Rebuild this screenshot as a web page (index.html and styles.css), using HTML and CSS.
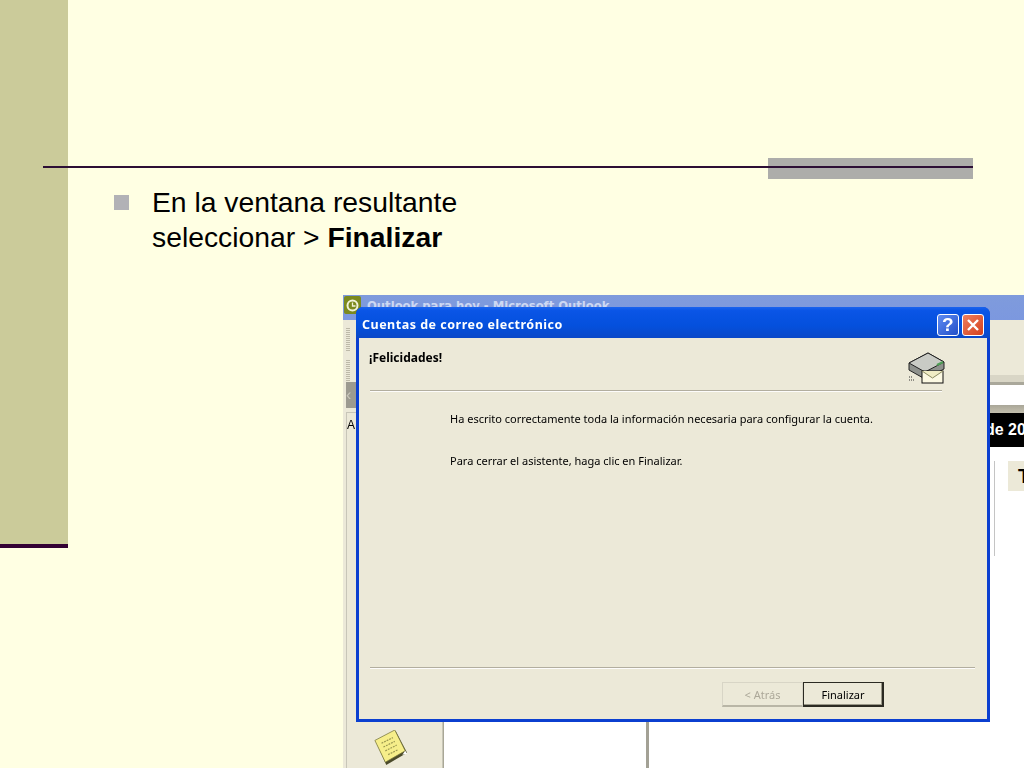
FILE: index.html
```html
<!DOCTYPE html>
<html lang="es">
<head>
    <meta charset="UTF-8">
    <meta name="viewport" content="width=device-width, initial-scale=1.0">
    <title>Cuentas de correo electrónico</title>
    <link rel="stylesheet" href="styles.css">
</head>
<body>
    <div class="slide">
        <div class="sidebar"></div>
        <div class="rule"><div class="rule-block"></div></div>

        <ul class="bullets">
            <li>En la ventana resultante<br>seleccionar &gt; <strong>Finalizar</strong></li>
        </ul>

        <!-- captura de pantalla de Outlook -->
        <div class="shot">
            <div class="shot-title">
                <svg class="shot-logo" width="17" height="18" viewBox="0 0 17 18">
                    <rect width="17" height="18" rx="2" fill="#7c8a1e"/>
                    <circle cx="8.500" cy="9.500" r="5" fill="none" stroke="#f1f2d8" stroke-width="2"/>
                    <path d="M8.500 6.500v3.500h3" fill="none" stroke="#f1f2d8" stroke-width="1.300"/>
                </svg>
                <span>Outlook para hoy - Microsoft Outlook</span>
            </div>
            <div class="shot-body">
                <div class="shot-left">
                    <div class="grip"></div>
                    <div class="grip"></div>
                    <div class="nav-head">‹</div>
                    <div class="nav-label">A</div>
                    <svg class="note" width="36" height="36" viewBox="0 0 38 38">
                        <path d="M3 12 L24 1 L36 24 L14 37 Z" fill="#4a4a2a"/>
                        <path d="M2 11 L23 0 L34 22 L13 34 Z" fill="#f6ee8a" stroke="#77763a" stroke-width=".8"/>
                        <path d="M9 14l12-6M11 18l12-6M13 22l12-6M16 26l10-5" stroke="#9b9850" stroke-width="1.300" stroke-dasharray="2 1"/>
                        <path d="M34 22l2 3-5 1z" fill="#fff"/>
                    </svg>
                </div>
                <div class="shot-list"></div>
                <div class="shot-main">
                    <div class="toolbar-space"></div>
                    <div class="toolbar-line"></div>
                    <div class="white-strip"></div>
                    <div class="tan-strip"></div>
                    <div class="date-bar"><span>de 20</span></div>
                    <div class="today">
                        <div class="today-line"></div>
                        <div class="today-box">T</div>
                    </div>
                </div>
            </div>
        </div>

        <!-- dialogo -->
        <div class="dialog">
            <div class="dialog-title">
                <span>Cuentas de correo electrónico</span>
                <div class="title-btns">
                    <div class="title-btn help">?</div>
                    <div class="title-btn close">
                        <svg width="14" height="14" viewBox="0 0 14 14">
                            <path d="M2 2l10 10M12 2l-10 10" stroke="#fff" stroke-width="2.400"/>
                        </svg>
                    </div>
                </div>
            </div>
            <div class="dialog-body">
                <div class="dialog-head">
                    <h2>¡Felicidades!</h2>
                    <svg class="mail-icon" width="38" height="32" viewBox="0 0 38 32">
                        <path d="M1 11 L20 1 L36 10 L36 17 L17 27 L1 18 Z" fill="#8f928d" stroke="#222" stroke-width="1"/>
                        <path d="M1 11 L17 20 L36 10 L20 1 Z" fill="#c9cbc5" stroke="#222" stroke-width="1"/>
                        <path d="M17 20 L17 27" stroke="#222"/>
                        <path d="M29 13l6-3" stroke="#4f9f55" stroke-width="2"/>
                        <path d="M1 25h4M1 28h5" stroke="#333" stroke-dasharray="1 1"/>
                        <rect x="14" y="19" width="21" height="12" fill="#fbf8e2" stroke="#111"/>
                        <path d="M14 19l10.500 7 10.500-7" fill="#f0ecc4" stroke="#8a8a60"/>
                    </svg>
                </div>
                <div class="sep sep-short"></div>
                <div class="message">
                    <p>Ha escrito correctamente toda la información necesaria para configurar la cuenta.</p>
                    <p>Para cerrar el asistente, haga clic en Finalizar.</p>
                </div>
                <div class="sep"></div>
                <div class="actions">
                    <button class="btn" disabled>&lt; Atrás</button>
                    <button class="btn primary">Finalizar</button>
                </div>
            </div>
        </div>
    </div>
</body>
</html>
```

FILE: styles.css
```css
html, body {
    margin: 0;
    padding: 0;
}
body {
    background: #ffffe3;
    font-family: "Liberation Sans", Arial, sans-serif;
}
.slide {
    position: relative;
    width: 1024px;
    height: 768px;
    overflow: hidden;
}
.sidebar {
    width: 68px;
    height: 544px;
    background: #cbcb9a;
    border-bottom: 4px solid #330033;
}
.rule {
    position: absolute;
    left: 43px;
    top: 166px;
    width: 930px;
    height: 2px;
    background: #2d0f35;
}
.rule-block {
    position: absolute;
    right: 0;
    top: -8px;
    width: 205px;
    height: 21px;
    background: #adadaa;
    z-index: -1;
}
.bullets {
    position: absolute;
    left: 115px;
    top: 185px;
    margin: 0;
    padding: 0;
    list-style: none;
}
.bullets li {
    position: relative;
    padding-left: 37px;
    font-size: 28.300px;
    line-height: 35px;
    color: #000;
}
.bullets li::before {
    content: "";
    position: absolute;
    left: -1px;
    top: 10px;
    width: 15px;
    height: 15px;
    background: #b2b2b6;
}

/* ventana de fondo */
.shot {
    position: absolute;
    left: 343px;
    top: 295px;
    width: 681px;
    height: 473px;
    display: flex;
    flex-direction: column;
    background: #ece9d8;
    filter: blur(.3px);
}
.shot-title {
    height: 25px;
    flex: none;
    display: flex;
    align-items: flex-start;
    gap: 6px;
    background: linear-gradient(#7f9bdc, #7c98df);
    color: #cdd8f3;
    font: bold 11.600px "DejaVu Sans", sans-serif;
    padding-top: 4px;
    box-sizing: border-box;
}
.shot-logo {
    margin-top: -3px;
    margin-left: 1px;
    flex: none;
}
.shot-body {
    flex: 1;
    display: flex;
    min-height: 0;
}
.shot-left {
    width: 100px;
    flex: none;
    padding-left: 2px;
    box-sizing: border-box;
    position: relative;
    background: #ece9d8;
}
.grip {
    width: 4px;
    height: 24px;
    margin: 8px 0 0 1px;
    background: repeating-linear-gradient(#bdb9a8 0 1px, #ece9d8 1px 2px);
}
.nav-head {
    margin: 0 0 0 3px;
    position: absolute;
    left: 0;
    top: 62px;
    width: 100%;
    height: 26px;
    background: #9c9a90;
    color: #c9c7bb;
    font-size: 16px;
    line-height: 26px;
}
.nav-label {
    position: absolute;
    left: 3px;
    top: 92px;
    width: 97px;
    height: 400px;
    border: 1px solid #c8c6b8;
    box-sizing: border-box;
    font-size: 12px;
    line-height: 24px;
}
.note {
    position: absolute;
    left: 30px;
    top: 410px;
}
.shot-list {
    width: 202px;
    flex: none;
    background: #fff;
    border-left: 1px solid #a9a796;
    margin-top: 92px;
}
.shot-main {
    flex: 1;
    min-width: 0;
    border-left: 3px solid #a3a195;
    background: #fff;
    display: flex;
    flex-direction: column;
}
.toolbar-space {
    height: 55px;
    flex: none;
    background: #ece9d8;
}
.toolbar-line {
    height: 7px;
    flex: none;
    background: #d9d6c6;
    border-bottom: 3px solid #aaa89b;
}
.white-strip {
    height: 20px;
    flex: none;
    background: #fff;
}
.tan-strip {
    height: 8px;
    flex: none;
    background: linear-gradient(#a9a698, #c4c0ae);
}
.date-bar {
    height: 34px;
    flex: none;
    background: #000;
    color: #fff;
    font: bold 16px/34px "Liberation Sans", sans-serif;
    display: flex;
    justify-content: flex-end;
    white-space: nowrap;
}
.date-bar span {
    width: 39px;
    overflow: hidden;
    flex: none;
}
.today {
    display: flex;
    justify-content: flex-end;
    padding-top: 14px;
}
.today-line {
    width: 1px;
    height: 95px;
    background: #c4c4c4;
    margin-right: 13px;
}
.today-box {
    width: 16px;
    height: 30px;
    background: #ece9d8;
    font: bold 20px/30px "Liberation Sans", sans-serif;
    padding-left: 10px;
    box-sizing: border-box;
    overflow: hidden;
}

/* dialogo */
.dialog {
    position: absolute;
    left: 356px;
    top: 307px;
    width: 634px;
    height: 415px;
    box-sizing: border-box;
    display: flex;
    flex-direction: column;
    background: #0b3fd0;
    border-radius: 7px 7px 0 0;
    padding: 0 3px 3px;
    filter: blur(.3px);
}
.dialog-title {
    height: 31px;
    flex: none;
    display: flex;
    align-items: center;
    justify-content: space-between;
    margin: 0 -3px;
    padding: 0 6px 0 6px;
    border-radius: 7px 7px 0 0;
    background: linear-gradient(#1a63ee 0, #0a55e6 12%, #0450dd 60%, #0a48c8 100%);
    color: #fff;
    font: bold 12.500px "Noto Sans", sans-serif;
    letter-spacing: .5px;
}
.dialog-title span {
    padding-top: 4px;
}
.title-btns {
    display: flex;
    gap: 3px;
    padding-top: 4px;
}
.title-btn {
    width: 22px;
    height: 22px;
    box-sizing: border-box;
    border: 1px solid #fff;
    border-radius: 3px;
    display: flex;
    align-items: center;
    justify-content: center;
}
.help {
    background: linear-gradient(135deg, #5f8cf2, #2350c8);
    color: #fff;
    font: bold 19px "Liberation Sans", sans-serif;
}
.close {
    background: linear-gradient(135deg, #ee8060, #d5401c);
}
.dialog-body {
    flex: 1;
    min-height: 0;
    background: #ece9d8;
    display: flex;
    flex-direction: column;
    padding: 0 12px 0 11px;
    color: #000;
    font: 11px "Noto Sans", "DejaVu Sans", sans-serif;
}
.dialog-head {
    height: 52px;
    display: flex;
    justify-content: space-between;
    flex: none;
    margin-right: 33px;
}
.dialog-head h2 {
    margin: 11px 0 0 -1px;
    font-size: 12px;
    font-weight: bold;
}
.mail-icon {
    margin: 14px -4px 0 0;
}
.sep {
    height: 1px;
    flex: none;
    background: #aca899;
    border-bottom: 1px solid #fff;
    opacity: .9;
}
.sep-short {
    margin-right: 33px;
}
.message {
    flex: 1;
    padding-left: 80px;
}
.message p {
    margin: 0 0 29px;
    line-height: 13px;
}
.message p:first-child {
    margin-top: 20px;
}
.actions {
    height: 50px;
    flex: none;
    display: flex;
    justify-content: flex-end;
    align-items: flex-start;
    padding: 13px 91px 0 0;
    box-sizing: border-box;
}
.btn {
    width: 81px;
    height: 25px;
    padding: 0;
    border: 1px solid #d8d5c6;
    border-bottom: 2px solid #b9b6a6;
    background: #ece9d8;
    color: #aca899;
    font: inherit;
}
.primary {
    border: 2px solid #2b2a22;
    border-top-width: 1px;
    border-left-width: 1px;
    color: #000;
    box-shadow: inset -1px -1px #9a9888;
}
```
